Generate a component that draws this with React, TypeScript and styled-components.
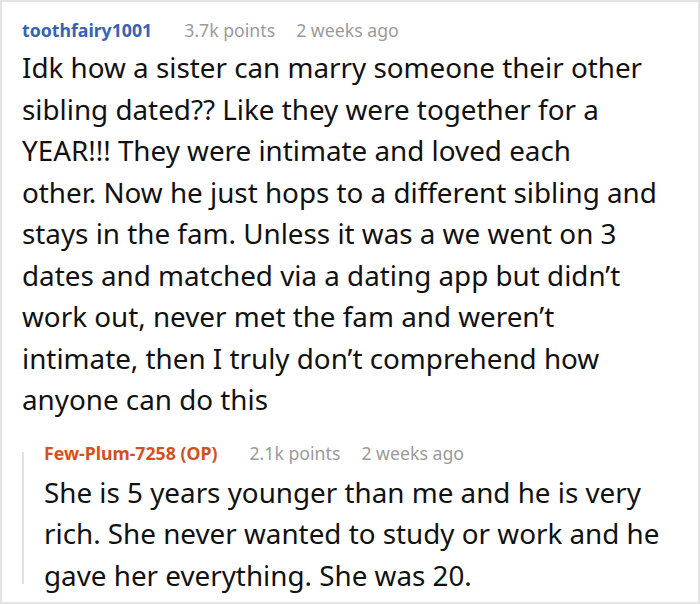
import React from "react";
import styled, { createGlobalStyle } from "styled-components";

const Global = createGlobalStyle`
  html, body { margin: 0; padding: 0; background: #fff; }
  body { font-family: "Noto Sans", "Open Sans", sans-serif; }
`;

const Card = styled.div`
  box-sizing: border-box;
  width: 700px;
  height: 604px;
  border: 2px solid #e4e4e4;
  padding: 17px 19px 0 20px;
  overflow: hidden;
  background: #fff;
`;

const Header = styled.div<{ $nested?: boolean }>`
  display: flex;
  align-items: baseline;
  font-size: 17.7px;
  line-height: 22px;
  white-space: nowrap;
  margin-top: ${(p) => (p.$nested ? "-10px" : "0")};
`;

const Author = styled.span<{ $op?: boolean }>`
  font-weight: 700;
  color: ${(p) => (p.$op ? "#d6501c" : "#3563b5")};
  margin-right: 32px;
`;

const Meta = styled.span`
  color: #9a9a9a;
  margin-right: 21px;
`;

const Body = styled.p`
  margin: 6px 0 0 0;
  font-size: 27.8px;
  line-height: 41.5px;
  color: #111;
`;

const Line = styled.span`
  display: block;
  white-space: nowrap;
`;

const Reply = styled.div`
  display: flow-root;
  margin-top: 31px;
  border-left: 2px solid #e2e2e2;
  padding-left: 20px;
`;

const ReplyBody = styled(Body)`
  margin-top: 8px;
  margin-bottom: -12px;
`;

type CommentProps = {
  author: string;
  op?: boolean;
  points: string;
  ago: string;
  nested?: boolean;
};

const CommentHeader = ({ author, op, points, ago, nested }: CommentProps) => (
  <Header $nested={nested}>
    <Author $op={op}>{author}</Author>
    <Meta>{points}</Meta>
    <Meta>{ago}</Meta>
  </Header>
);

const mainLines = [
  "Idk how a sister can marry someone their other",
  "sibling dated?? Like they were together for a",
  "YEAR!!! They were intimate and loved each",
  "other. Now he just hops to a different sibling and",
  "stays in the fam. Unless it was a we went on 3",
  "dates and matched via a dating app but didn’t",
  "work out, never met the fam and weren’t",
  "intimate, then I truly don’t comprehend how",
  "anyone can do this",
];

const replyLines = [
  "She is 5 years younger than me and he is very",
  "rich. She never wanted to study or work and he",
  "gave her everything. She was 20.",
];

export default function App() {
  return (
    <>
      <Global />
      <Card>
        <CommentHeader author="toothfairy1001" points="3.7k points" ago="2 weeks ago" />
        <Body>
          {mainLines.map((l) => (
            <Line key={l}>{l}</Line>
          ))}
        </Body>
        <Reply>
          <CommentHeader
            nested
            author="Few-Plum-7258 (OP)"
            op
            points="2.1k points"
            ago="2 weeks ago"
          />
          <ReplyBody>
            {replyLines.map((l) => (
              <Line key={l}>{l}</Line>
            ))}
          </ReplyBody>
        </Reply>
      </Card>
    </>
  );
}
